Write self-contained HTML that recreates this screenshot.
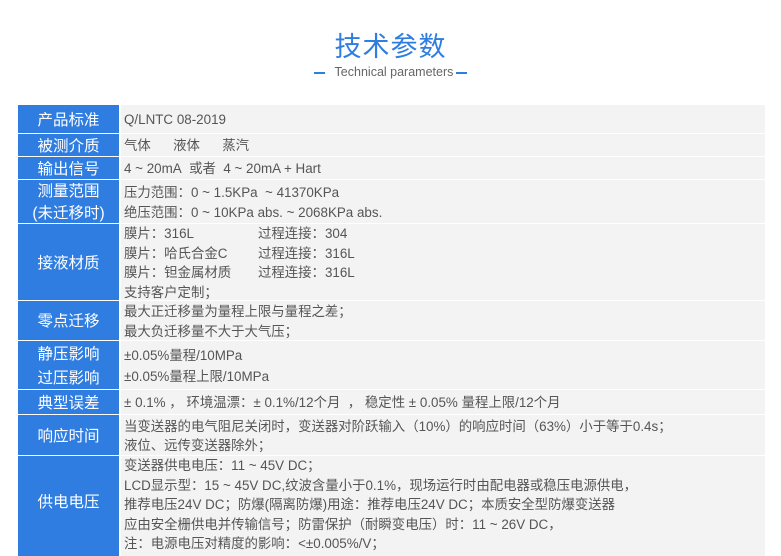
<!DOCTYPE html>
<html><head><meta charset="utf-8"><style>
*{margin:0;padding:0;box-sizing:border-box}
body{width:781px;height:551px;background:#fff;overflow:hidden;position:relative;font-family:"Liberation Sans","Noto Sans CJK SC",sans-serif}
.t{position:absolute;left:0;width:781px;top:25px;text-align:center;font-size:27px;color:#2f7de1;letter-spacing:1px}
.s{position:absolute;left:0;width:781px;top:65px;text-align:center;font-size:12.5px;color:#666}
.s i{display:inline-block;width:11px;height:2px;background:#2f7de1;vertical-align:middle;margin:0 3px}
.r{position:absolute;left:18px;width:747px}
.l{position:absolute;left:0;top:0;bottom:0;width:101px;background:#2f7de1;color:#fff;font-size:15.5px;display:flex;align-items:center;justify-content:center;text-align:center;line-height:22px;padding-top:3px}
.v{position:absolute;left:103px;right:0;top:0;bottom:0;background:#f3f3f3;color:#555;font-size:13.4px;padding:2px 0 0 3px;line-height:19.5px;display:flex;flex-direction:column;justify-content:center;white-space:nowrap}
</style></head><body>
<div class="t">技术参数</div>
<div class="s"><i></i>&nbsp;&nbsp;Technical parameters<i></i></div>

<div class="r" style="top:105px;height:28px"><div class="l">产品标准</div><div class="v">Q/LNTC 08-2019</div></div>
<div class="r" style="top:134px;height:22px"><div class="l">被测介质</div><div class="v">气体&nbsp;&nbsp;&nbsp;&nbsp;&nbsp;&nbsp;液体&nbsp;&nbsp;&nbsp;&nbsp;&nbsp;&nbsp;蒸汽</div></div>
<div class="r" style="top:157px;height:22px"><div class="l">输出信号</div><div class="v">4 ~ 20mA&nbsp;&nbsp;或者&nbsp;&nbsp;4 ~ 20mA + Hart</div></div>
<div class="r" style="top:180px;height:43px"><div class="l">测量范围<br>(未迁移时)</div><div class="v"><div>压力范围：0 ~ 1.5KPa&nbsp;&nbsp;~ 41370KPa</div><div>绝压范围：0 ~ 10KPa abs.&nbsp;~&nbsp;2068KPa abs.</div></div></div>
<div class="r" style="top:224px;height:76px"><div class="l">接液材质</div><div class="v"><div>膜片：316L<span style="position:absolute;left:137px">过程连接：304</span></div><div>膜片：哈氏合金C<span style="position:absolute;left:137px">过程连接：316L</span></div><div>膜片：钽金属材质<span style="position:absolute;left:137px">过程连接：316L</span></div><div>支持客户定制；</div></div></div>
<div class="r" style="top:301px;height:39px"><div class="l">零点迁移</div><div class="v"><div>最大正迁移量为量程上限与量程之差；</div><div>最大负迁移量不大于大气压；</div></div></div>
<div class="r" style="top:341px;height:48px"><div class="l" style="line-height:24px">静压影响<br>过压影响</div><div class="v" style="line-height:21px"><div>±0.05%量程/10MPa</div><div>±0.05%量程上限/10MPa</div></div></div>
<div class="r" style="top:390px;height:24px"><div class="l">典型误差</div><div class="v">± 0.1% ，&nbsp;环境温漂：± 0.1%/12个月&nbsp;&nbsp;，&nbsp;稳定性 ± 0.05% 量程上限/12个月</div></div>
<div class="r" style="top:415px;height:40px"><div class="l">响应时间</div><div class="v"><div>当变送器的电气阻尼关闭时，变送器对阶跃输入（10%）的响应时间（63%）小于等于0.4s；</div><div>液位、远传变送器除外；</div></div></div>
<div class="r" style="top:456px;height:100px"><div class="l" style="padding-bottom:10px">供电电压</div><div class="v" style="justify-content:flex-start;padding-top:0"><div>变送器供电电压：11 ~ 45V DC；</div><div>LCD显示型：15 ~ 45V DC,纹波含量小于0.1%，现场运行时由配电器或稳压电源供电，</div><div>推荐电压24V DC；防爆(隔离防爆)用途：推荐电压24V DC；本质安全型防爆变送器</div><div>应由安全栅供电并传输信号；防雷保护（耐瞬变电压）时：11 ~ 26V DC，</div><div>注：电源电压对精度的影响：&lt;±0.005%/V；</div></div></div>
</body></html>
